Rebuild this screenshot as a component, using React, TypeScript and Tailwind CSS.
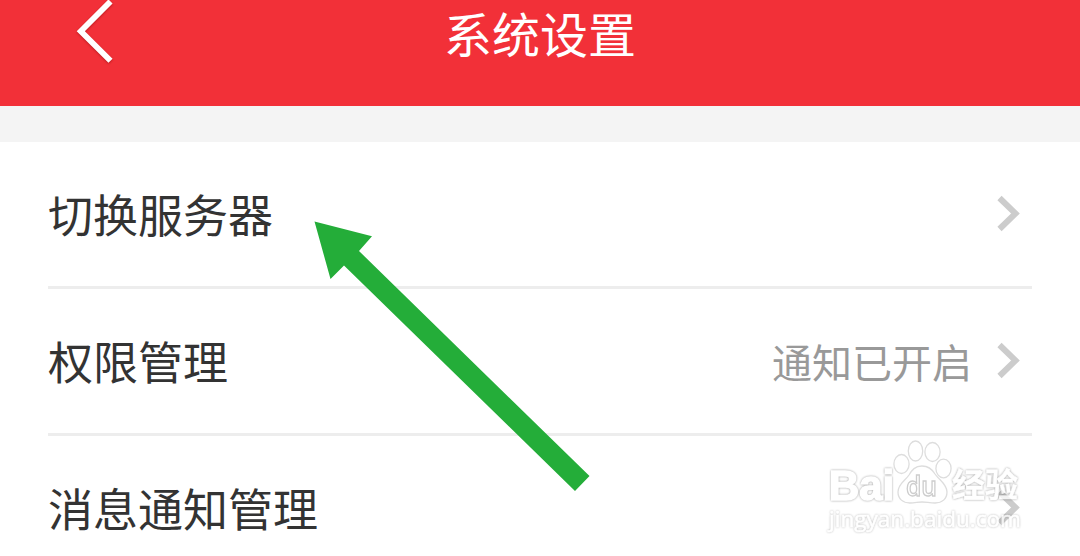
import * as React from "react";

type SettingItem = {
  label: string;
  value?: string;
};

const settings: SettingItem[] = [
  { label: "切换服务器" },
  { label: "权限管理", value: "通知已开启" },
  { label: "消息通知管理" },
];

function Header() {
  return (
    <header className="relative flex h-[106px] items-start justify-center bg-[#f23038]">
      <svg
        className="absolute left-[70px] top-0 drop-shadow-[0_1px_1px_rgba(120,0,0,0.45)]"
        width="50"
        height="70"
        fill="none"
        stroke="#fff"
        strokeWidth="5.8"
      >
        <path d="M40.5 1.5 10.8 31.2l29.7 29.6" />
      </svg>
      <h1 className="text-[48px] leading-16 text-white">系统设置</h1>
    </header>
  );
}

function SettingRow({ label, value }: SettingItem) {
  return (
    <li className="flex h-[147px] shrink-0 items-center justify-between border-b-[3px] border-[#ededed] pr-3">
      <span className="text-[45px] leading-[66px] text-[#333]">{label}</span>
      <div className="flex items-center gap-[25px]">
        {value && (
          <span className="text-[40px] leading-[58px] text-[#999]">{value}</span>
        )}
        <svg
          width="23"
          height="38"
          fill="none"
          stroke="#cccccc"
          strokeWidth="6"
        >
          <path d="M2.5 3 18.5 18.5 2.5 34" />
        </svg>
      </div>
    </li>
  );
}

// green pointer on the first row
function Arrow() {
  return (
    <svg className="absolute left-0 top-0" width="1080" height="556">
      <path
        d="M314.5 221.5 372 236.3 359 251 589.5 476 575 491 344 265.5 330.5 279Z"
        fill="#24ad39"
      />
    </svg>
  );
}

function Watermark() {
  return (
    <svg
      className="absolute left-[820px] top-[435px] opacity-75"
      width="220"
      height="110"
      fill="#fff"
      fontFamily="'Open Sans', 'Noto Sans CJK SC', sans-serif"
    >
      <g fill="#fff" fillOpacity="0.3" stroke="#d2d2d2" strokeWidth="1.3">
        <ellipse cx="81.5" cy="29" rx="7.6" ry="9.5" />
        <ellipse cx="95.5" cy="16" rx="7.2" ry="10" />
        <ellipse cx="112.5" cy="17" rx="7.6" ry="9.5" />
        <ellipse cx="123.5" cy="33.5" rx="7.6" ry="9.3" />
        <path d="M102 31c-7 0-10 4-13 9-4 6-11 9-11 17 0 7 5 11 12 11 5 0 8-1 12-1s8 1 13 1c7 0 12-4 12-11 0-8-8-12-12-18-3-5-7-8-13-8Z" />
      </g>
      {/* white letters with a thin grey glow */}
      <g
        className="drop-shadow-[0_0_1px_rgba(0,0,0,0.5)]"
        stroke="#fff"
        strokeWidth="1.6"
        fontWeight="700"
      >
        <text x="9" y="64.5" fontSize="43" fontFamily="'Liberation Sans', sans-serif" textLength="65" lengthAdjust="spacingAndGlyphs">
          Bai
        </text>
        <text x="132" y="62" fontSize="33" strokeWidth="0.5" textLength="66" lengthAdjust="spacingAndGlyphs">
          经验
        </text>
      </g>
      <text x="86" y="61" fontSize="27" fontWeight="600" stroke="#bdbdbd" strokeWidth="1.4" textLength="31" lengthAdjust="spacingAndGlyphs">
        du
      </text>
      <text
        className="drop-shadow-[0_0_1px_rgba(0,0,0,0.35)]"
        x="9"
        y="92"
        fontSize="22"
        stroke="#fff"
        strokeWidth="0.6"
        textLength="192"
        lengthAdjust="spacingAndGlyphs"
      >
        jingyan.baidu.com
      </text>
    </svg>
  );
}

function App() {
  return (
    <main className="relative h-[556px] w-full overflow-hidden bg-white font-['Noto_Sans_CJK_SC',sans-serif]">
      <Header />
      <div className="h-9 bg-[#f4f4f4]" />
      <ul className="flex flex-col px-12">
        {settings.map((item) => (
          <SettingRow key={item.label} {...item} />
        ))}
      </ul>
      <Watermark />
      <Arrow />
    </main>
  );
}

export default App;
